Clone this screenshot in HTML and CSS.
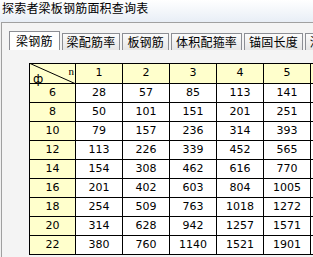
FILE: index.html
```html
<!DOCTYPE html>
<html lang="zh-CN">
<head>
    <meta charset="UTF-8">
    <title>探索者梁板钢筋面积查询表</title>
    <link rel="stylesheet" href="styles.css">
</head>
<body>

    <div class="titlebar">探索者梁板钢筋面积查询表</div>

    <div class="frame">
        <div class="tabs">
            <div class="tab active">梁钢筋</div>
            <div class="tab">梁配筋率</div>
            <div class="tab">板钢筋</div>
            <div class="tab">体积配箍率</div>
            <div class="tab">锚固长度</div>
            <div class="tab">混凝土</div>
        </div>

        <div class="page">
            <div class="grid" id="grid">
                <div class="cell head corner">
                    <svg class="diag" viewBox="0 0 100 100" preserveAspectRatio="none">
                        <line x1="0" y1="0" x2="100" y2="100" stroke="#000" stroke-width="1" vector-effect="non-scaling-stroke"/>
                    </svg>
                    <span class="phi">ф</span>
                    <span class="n">n</span>
                </div>
            </div>
        </div>
    </div>

    <script>
        const diameters = [6, 8, 10, 12, 14, 16, 18, 20, 22];
        const counts = [1, 2, 3, 4, 5, 6];
        const grid = document.getElementById('grid');

        counts.forEach(n => {
            const cell = document.createElement('div');
            cell.className = 'cell head';
            cell.textContent = n;
            grid.appendChild(cell);
        });

        diameters.forEach(d => {
            const side = document.createElement('div');
            side.className = 'cell head';
            side.textContent = d;
            grid.appendChild(side);

            // area of one bar, times n
            const one = Math.PI * d * d / 4;
            counts.forEach(n => {
                const cell = document.createElement('div');
                cell.className = 'cell';
                cell.textContent = Math.round(one * n);
                grid.appendChild(cell);
            });
        });
    </script>

</body>
</html>
```

FILE: styles.css
```css
* {
    margin: 0;
    padding: 0;
    box-sizing: border-box;
}

body {
    width: 313px;
    height: 257px;
    overflow: hidden;
    background-color: #f0f0f0;
    font-family: "Noto Sans CJK SC", "DejaVu Sans", sans-serif;
    color: #000;
}

.titlebar {
    height: 22px;
    padding: 0 0 0 2px;
    font-size: 12px;
    line-height: 16px;
    letter-spacing: 0.2px;
    background: linear-gradient(#ffffff, #e8eef6);
}

.frame {
    margin-left: 1px;
    height: 235px;
    border-top: 1px solid #a0a0a0;
    border-left: 1px solid #a0a0a0;
    padding: 8px 0 0 7px;
    background-color: #f4f4f4;
}

.tabs {
    display: flex;
    align-items: flex-end;
    height: 19px;
    white-space: nowrap;
}

.tab {
    height: 17px;
    padding: 0 4px;
    margin-right: 2px;
    border: 1px solid #8c8e94;
    border-bottom: none;
    background: linear-gradient(#fbfbfb, #e6e6e6);
    font-size: 12px;
    line-height: 16px;
    letter-spacing: 0.2px;
}

.tab.active {
    height: 19px;
    padding: 0 6px;
    background: #ffffff;
    line-height: 18px;
}

.page {
    padding: 13px 0 0 20px;
}

.grid {
    display: grid;
    grid-template-columns: 45px repeat(6, 46px);
    grid-template-rows: 19px;
    grid-auto-rows: 18px;
    gap: 1px;
    width: max-content;
    padding: 1px;
    background-color: #000;
}

.cell {
    background-color: #ffffff;
    font-family: "DejaVu Sans", sans-serif;
    font-size: 11px;
    line-height: 18px;
    text-align: center;
}

.cell.head {
    background-color: #ffffcc;
}

.corner {
    position: relative;
}

.diag {
    position: absolute;
    top: -1px;
    left: -1px;
    width: 47px;
    height: 21px;
}

.phi {
    position: absolute;
    left: 3px;
    top: 6px;
    font-size: 12px;
}

.n {
    position: absolute;
    right: 1px;
    top: -2px;
    font-family: "Liberation Serif", serif;
    font-size: 11px;
}
```
